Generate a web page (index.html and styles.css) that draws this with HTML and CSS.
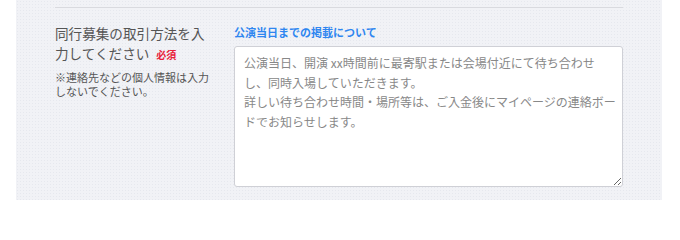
FILE: index.html
```html
<!DOCTYPE html>
<html lang="ja">
<head>
<meta charset="utf-8">
<link rel="stylesheet" href="styles.css">
</head>
<body>
<div class="panel">
  <hr class="divider">
  <div class="row">
    <div class="label-col">
      <div class="title">同行募集の取引方法を入力してください<span class="req">必須</span></div>
      <p class="note">※連絡先などの個人情報は入力しないでください。</p>
    </div>
    <div class="field-col">
      <div class="field-label">公演当日までの掲載について</div>
      <textarea class="textarea">公演当日、開演 xx時間前に最寄駅または会場付近にて待ち合わせ
し、同時入場していただきます。
詳しい待ち合わせ時間・場所等は、ご入金後にマイページの連絡ボー
ドでお知らせします。</textarea>
    </div>
  </div>
</div>
</body>
</html>
```

FILE: styles.css
```css
html, body {
  margin: 0;
  padding: 0;
  background: #ffffff;
  font-family: "Noto Sans CJK JP", "Noto Sans", sans-serif;
}
.panel {
  margin: 0 18px 0 16px;
  height: 200px;
  box-sizing: border-box;
  padding: 7px 39px 0 39px;
  background-color: #f1f2f6;
  background-image: radial-gradient(circle, #e6e8ee 0.6px, transparent 0.8px);
  background-size: 3px 3px;
}
.divider {
  margin: 0;
  border: 0;
  border-top: 1px solid #d9dadf;
  height: 0;
}
.row {
  display: flex;
  margin-top: 15px;
}
.label-col {
  width: 160px;
  margin-right: 19px;
}
.title {
  font-size: 13.6px;
  line-height: 19.5px;
  color: #555555;
  margin-top: 1px;
}
.req {
  display: inline-block;
  margin-left: 7px;
  font-size: 10px;
  line-height: 12px;
  font-weight: bold;
  color: #e8203a;
  vertical-align: 0;
}
.note {
  margin: 7px 0 0 0;
  font-size: 11px;
  line-height: 14px;
  color: #555555;
}
.field-col {
  width: 389px;
  display: flex;
  flex-direction: column;
}
.field-label {
  font-size: 11px;
  font-weight: bold;
  line-height: 16px;
  color: #2f86f0;
  margin-top: 1px;
}
.textarea {
  margin-top: 6px;
  box-sizing: border-box;
  width: 389px;
  height: 141px;
  border: 1px solid #cfd0d6;
  border-radius: 3px;
  background: #ffffff;
  padding: 6px 2px 6px 9px;
  font-family: "Noto Sans CJK JP", "Noto Sans", sans-serif;
  font-size: 12px;
  line-height: 19.6px;
  color: #888888;
  resize: both;
  outline: none;
  overflow: hidden;
}
```
